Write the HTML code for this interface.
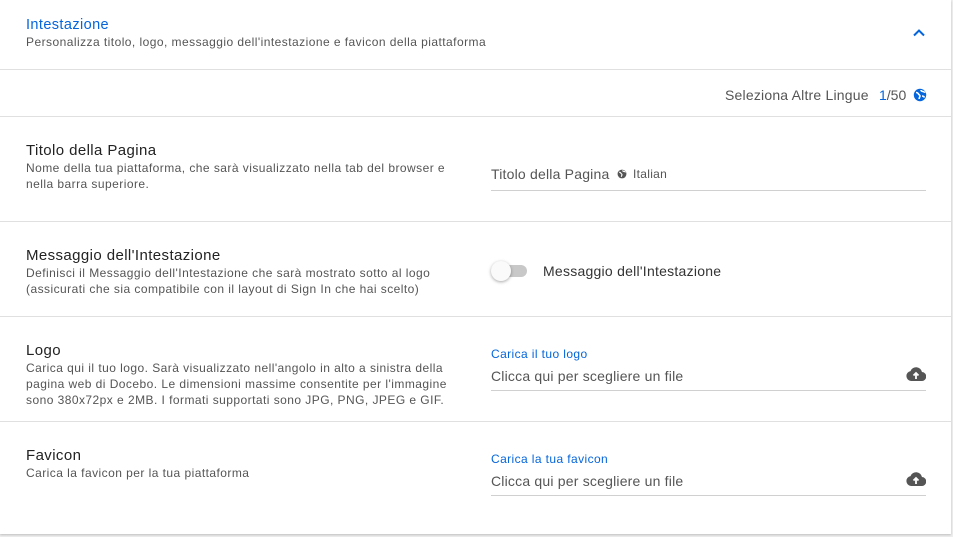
<!DOCTYPE html>
<html><head><meta charset="utf-8"><style>
*{box-sizing:border-box;margin:0;padding:0}
body{width:953px;height:537px;background:#eeeeee;font-family:"Liberation Sans",sans-serif;position:relative;overflow:hidden}
.card{position:absolute;left:0;top:0;width:951px;height:534px;background:#fff;box-shadow:0 1px 2px rgba(0,0,0,.2)}
.sep{position:absolute;left:0;width:951px;height:1px;background:#e0e0e0}
.t{position:absolute;white-space:nowrap}
.h{font-size:15px;color:#222;letter-spacing:0.4px}
.d{font-size:12px;color:#555;line-height:16px;letter-spacing:0.45px}
.line{position:absolute;left:491px;width:435px;height:1px;background:#d0d0d0}
.in{font-size:14px;color:#555;letter-spacing:0.2px}
.lbl{font-size:12px;color:#0465dc;letter-spacing:0.4px}
</style></head><body>
<div class="card">
<div class="t" style="left:26px;top:17px;font-size:14.5px;color:#0465dc;letter-spacing:0.4px">Intestazione</div>
<div class="t d" style="left:26px;top:34px">Personalizza titolo, logo, messaggio dell'intestazione e favicon della piattaforma</div>
<svg style="position:absolute;left:912px;top:28px" width="14" height="10" viewBox="0 0 14 10"><path d="M2 7.5L7 2.5L12 7.5" stroke="#0465dc" stroke-width="2" fill="none"/></svg>
<div class="sep" style="top:69px"></div>
<div class="t" style="left:725px;top:87px;font-size:14px;color:#555;letter-spacing:0.2px">Seleziona Altre Lingue</div>
<div class="t" style="left:879px;top:87px;font-size:14px;color:#555"><span style="color:#0465dc">1</span>/50</div>
<svg style="position:absolute;left:913px;top:88px" width="14" height="14" viewBox="0 0 14 14"><circle cx="7" cy="7" r="6.2" fill="#0465dc"/><path d="M3 4.5c1 0 2 .5 2.5 1.5s1.5 1 1.5 2-1 1.5-.8 3M8 2c0 1 1 1.5 2 1.5s1.5 1 2 .5M9 8c1 0 2 .5 2.5 1.5" stroke="#fff" stroke-width="1.6" fill="none"/></svg>
<div class="sep" style="top:116px"></div>
<div class="t h" style="left:26px;top:142px">Titolo della Pagina</div>
<div class="t d" style="left:26px;top:160px">Nome della tua piattaforma, che sarà visualizzato nella tab del browser e<br>nella barra superiore.</div>
<div class="t in" style="left:491px;top:166px">Titolo della Pagina</div>
<svg style="position:absolute;left:617px;top:169px" width="10" height="10" viewBox="0 0 14 14"><circle cx="7" cy="7" r="6.2" fill="#555"/><path d="M3 4.5c1 0 2 .5 2.5 1.5s1.5 1 1.5 2-1 1.5-.8 3M8 2c0 1 1 1.5 2 1.5s1.5 1 2 .5" stroke="#fff" stroke-width="1.6" fill="none"/></svg>
<div class="t" style="left:633px;top:167px;font-size:12px;color:#555;letter-spacing:0.3px">Italian</div>
<div class="line" style="top:190px"></div>
<div class="sep" style="top:221px"></div>
<div class="t h" style="left:26px;top:247px">Messaggio dell'Intestazione</div>
<div class="t d" style="left:26px;top:265px">Definisci il Messaggio dell'Intestazione che sarà mostrato sotto al logo<br>(assicurati che sia compatibile con il layout di Sign In che hai scelto)</div>
<div style="position:absolute;left:494px;top:265px;width:33px;height:12px;border-radius:6px;background:#c8c8c8"></div>
<div style="position:absolute;left:491px;top:261px;width:20px;height:20px;border-radius:50%;background:#fafafa;box-shadow:0 1px 3px rgba(0,0,0,.35)"></div>
<div class="t" style="left:543px;top:263px;font-size:14px;color:#333;letter-spacing:0.25px">Messaggio dell'Intestazione</div>
<div class="sep" style="top:316px"></div>
<div class="t h" style="left:26px;top:342px">Logo</div>
<div class="t d" style="left:26px;top:360px">Carica qui il tuo logo. Sarà visualizzato nell'angolo in alto a sinistra della<br>pagina web di Docebo. Le dimensioni massime consentite per l'immagine<br>sono 380x72px e 2MB. I formati supportati sono JPG, PNG, JPEG e GIF.</div>
<div class="t lbl" style="left:491px;top:347px">Carica il tuo logo</div>
<div class="t in" style="left:491px;top:368px">Clicca qui per scegliere un file</div>
<svg style="position:absolute;left:906px;top:367px" width="20" height="14" viewBox="0 0 20 14"><path d="M5 14a5 5 0 0 1-.5-9.9A6 6 0 0 1 16 5a4.5 4.5 0 0 1-.5 9z" fill="#555"/><path d="M10 12V6M7.5 8.5L10 6l2.5 2.5" stroke="#fff" stroke-width="1.8" fill="none"/></svg>
<div class="line" style="top:390px"></div>
<div class="sep" style="top:421px"></div>
<div class="t h" style="left:26px;top:447px">Favicon</div>
<div class="t d" style="left:26px;top:465px">Carica la favicon per la tua piattaforma</div>
<div class="t lbl" style="left:491px;top:452px">Carica la tua favicon</div>
<div class="t in" style="left:491px;top:473px">Clicca qui per scegliere un file</div>
<svg style="position:absolute;left:906px;top:472px" width="20" height="14" viewBox="0 0 20 14"><path d="M5 14a5 5 0 0 1-.5-9.9A6 6 0 0 1 16 5a4.5 4.5 0 0 1-.5 9z" fill="#555"/><path d="M10 12V6M7.5 8.5L10 6l2.5 2.5" stroke="#fff" stroke-width="1.8" fill="none"/></svg>
<div class="line" style="top:495px"></div>
</div>
</body></html>
